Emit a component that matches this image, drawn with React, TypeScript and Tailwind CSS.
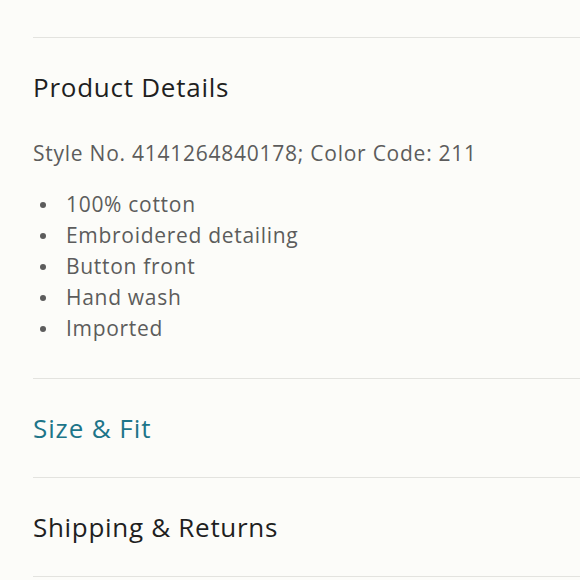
import React from "react";

const font = { fontFamily: "'Open Sans', 'Noto Sans', sans-serif" };

export default function App() {
  const items = ["100% cotton", "Embroidered detailing", "Button front", "Hand wash", "Imported"];
  return (
    <div className="w-[580px] h-[580px] overflow-hidden bg-[#fcfcf9]" style={font}>
      <div className="h-[37px]" />
      <div className="ml-[33px] border-t border-[#e3e3df]">
        <div className="h-[98px] flex items-center">
          <h2 className="text-[26px] leading-none text-[#1f1f1f] tracking-[0.75px]">Product Details</h2>
        </div>
        <p className="text-[21px] leading-none text-[#5c5c5c] tracking-[0.75px] pt-[7px]">
          Style No. 4141264840178; Color Code: 211
        </p>
        <ul className="mt-[25px] h-[189px] text-[21px] text-[#5c5c5c] tracking-[0.7px]">
          {items.map((t) => (
            <li key={t} className="flex items-center h-[31px]">
              <span className="w-[33px] flex justify-start pl-[7px]">
                <span className="w-[6px] h-[6px] rounded-full bg-[#5c5c5c]" />
              </span>
              <span>{t}</span>
            </li>
          ))}
        </ul>
      </div>
      <div className="ml-[33px] border-t border-[#e3e3df] h-[99px] flex items-center">
        <h2 className="text-[26px] leading-none text-[#1d7589] tracking-[0.9px]">Size &amp; Fit</h2>
      </div>
      <div className="ml-[33px] border-t border-[#e3e3df] h-[99px] flex items-center">
        <h2 className="text-[26px] leading-none text-[#1f1f1f] tracking-[0.7px]">Shipping &amp; Returns</h2>
      </div>
      <div className="ml-[33px] border-t border-[#e3e3df]" />
    </div>
  );
}
